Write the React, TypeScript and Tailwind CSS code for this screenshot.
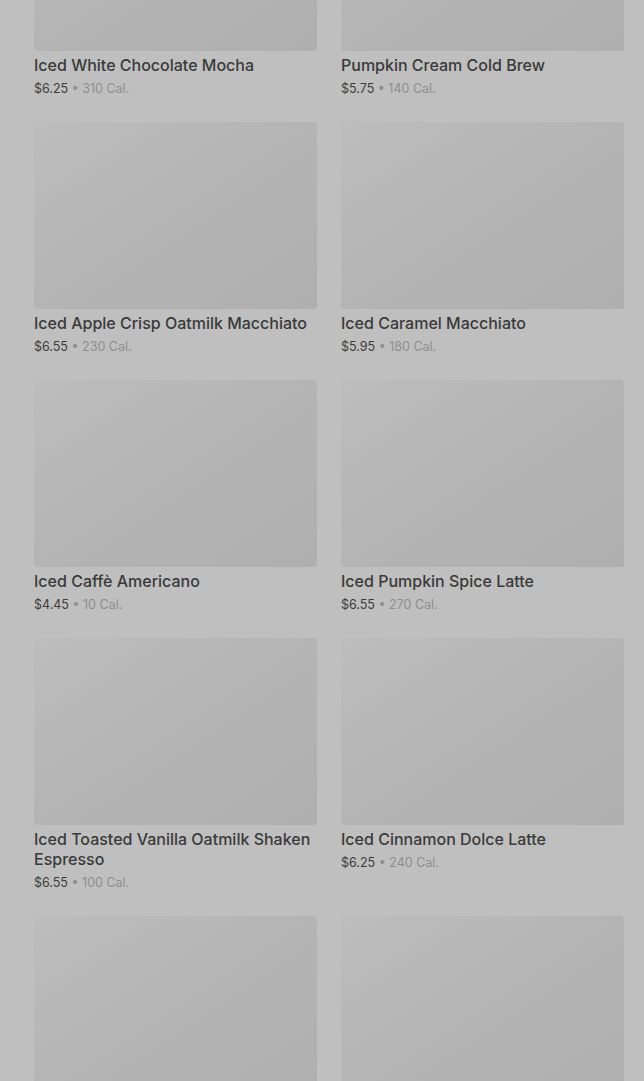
const drinks = [
  { name: "Iced White Chocolate Mocha", price: "$6.25", cal: 310 },
  { name: "Pumpkin Cream Cold Brew", price: "$5.75", cal: 140 },
  { name: "Iced Apple Crisp Oatmilk Macchiato", price: "$6.55", cal: 230 },
  { name: "Iced Caramel Macchiato", price: "$5.95", cal: 180 },
  { name: "Iced Caffè Americano", price: "$4.45", cal: 10 },
  { name: "Iced Pumpkin Spice Latte", price: "$6.55", cal: 270 },
  { name: "Iced Toasted Vanilla Oatmilk Shaken Espresso", price: "$6.55", cal: 100 },
  { name: "Iced Cinnamon Dolce Latte", price: "$6.25", cal: 240 },
];

function Thumb() {
  return <div className="h-[187px] rounded-[3px] bg-linear-to-br from-[#bdbdbd] via-[#b4b4b4] to-[#afafaf]" />;
}

function DrinkCard({ name, price, cal }: { name: string; price: string; cal: number }) {
  return (
    <div className="flex flex-col">
      <Thumb />
      <p className="mt-[4px] text-[16px] leading-[20px] font-medium text-[#3a3a3a]">{name}</p>
      <p className="mt-[4px] text-[12.5px] leading-[19px] text-[#3c3c3c]">
        {price}
        <span className="text-[#8e8e8e]"> • {cal} Cal.</span>
      </p>
    </div>
  );
}

export default function App() {
  return (
    <div
      className="h-[1081px] overflow-hidden bg-[#bfbfbf]"
      style={{ fontFamily: "Inter, 'Liberation Sans', sans-serif" }}
    >
      <div className="-mt-[136px] grid grid-cols-2 gap-x-6 gap-y-6 pl-[34px] pr-[20px]">
        {drinks.map((d) => (
          <DrinkCard key={d.name} {...d} />
        ))}
        {/* next row, only the pictures are in view */}
        <Thumb />
        <Thumb />
      </div>
    </div>
  );
}
